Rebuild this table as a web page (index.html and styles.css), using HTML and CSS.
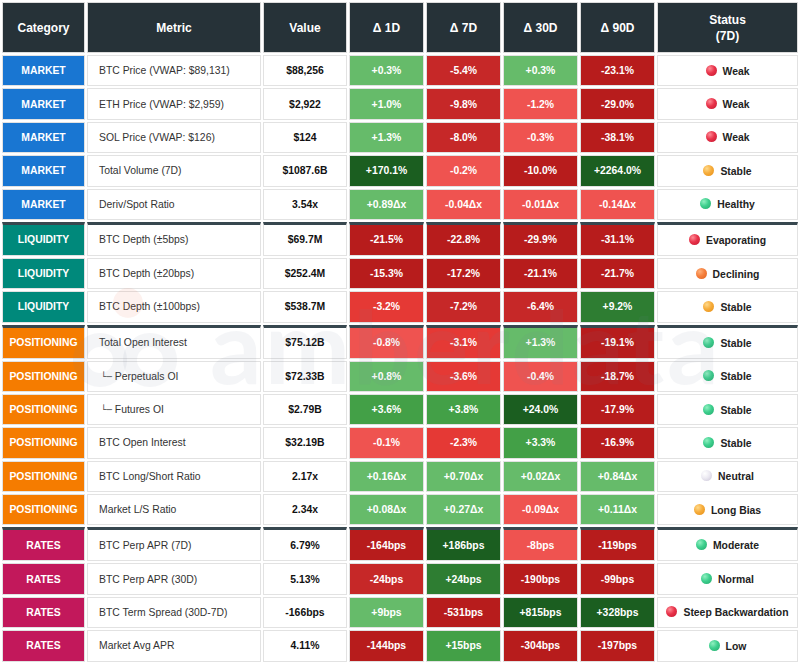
FILE: index.html
```html
<!DOCTYPE html>
<html>
<head>
<meta charset="utf-8">
<link rel="stylesheet" href="styles.css">
</head>
<body>
<div class="wrap">
<table class="grid">
  <colgroup>
    <col class="c-cat"><col class="c-metric"><col class="c-value">
    <col class="c-d"><col class="c-d"><col class="c-d"><col class="c-d">
    <col class="c-status">
  </colgroup>
  <thead>
    <tr>
      <th>Category</th><th>Metric</th><th>Value</th>
      <th>Δ 1D</th><th>Δ 7D</th><th>Δ 30D</th><th>Δ 90D</th>
      <th>Status<br>(7D)</th>
    </tr>
  </thead>
  <tbody>
    <tr>
      <td class="cat market">MARKET</td><td class="metric">BTC Price (VWAP: $89,131)</td><td class="value">$88,256</td>
      <td class="d g1">+0.3%</td><td class="d r3">-5.4%</td><td class="d g1">+0.3%</td><td class="d r4">-23.1%</td>
      <td class="status"><span class="dot red"></span>Weak</td>
    </tr>
    <tr>
      <td class="cat market">MARKET</td><td class="metric">ETH Price (VWAP: $2,959)</td><td class="value">$2,922</td>
      <td class="d g1">+1.0%</td><td class="d r3">-9.8%</td><td class="d r1">-1.2%</td><td class="d r4">-29.0%</td>
      <td class="status"><span class="dot red"></span>Weak</td>
    </tr>
    <tr>
      <td class="cat market">MARKET</td><td class="metric">SOL Price (VWAP: $126)</td><td class="value">$124</td>
      <td class="d g1">+1.3%</td><td class="d r3">-8.0%</td><td class="d r1">-0.3%</td><td class="d r4">-38.1%</td>
      <td class="status"><span class="dot red"></span>Weak</td>
    </tr>
    <tr>
      <td class="cat market">MARKET</td><td class="metric">Total Volume (7D)</td><td class="value">$1087.6B</td>
      <td class="d g4">+170.1%</td><td class="d r1">-0.2%</td><td class="d r4">-10.0%</td><td class="d g4">+2264.0%</td>
      <td class="status"><span class="dot amber"></span>Stable</td>
    </tr>
    <tr>
      <td class="cat market">MARKET</td><td class="metric">Deriv/Spot Ratio</td><td class="value">3.54x</td>
      <td class="d g1">+0.89Δx</td><td class="d r1">-0.04Δx</td><td class="d r1">-0.01Δx</td><td class="d r1">-0.14Δx</td>
      <td class="status"><span class="dot green"></span>Healthy</td>
    </tr>
    <tr class="group">
      <td class="cat liquidity">LIQUIDITY</td><td class="metric">BTC Depth (±5bps)</td><td class="value">$69.7M</td>
      <td class="d r4">-21.5%</td><td class="d r4">-22.8%</td><td class="d r4">-29.9%</td><td class="d r4">-31.1%</td>
      <td class="status"><span class="dot red"></span>Evaporating</td>
    </tr>
    <tr>
      <td class="cat liquidity">LIQUIDITY</td><td class="metric">BTC Depth (±20bps)</td><td class="value">$252.4M</td>
      <td class="d r4">-15.3%</td><td class="d r4">-17.2%</td><td class="d r4">-21.1%</td><td class="d r4">-21.7%</td>
      <td class="status"><span class="dot orange"></span>Declining</td>
    </tr>
    <tr>
      <td class="cat liquidity">LIQUIDITY</td><td class="metric">BTC Depth (±100bps)</td><td class="value">$538.7M</td>
      <td class="d r2">-3.2%</td><td class="d r3">-7.2%</td><td class="d r3">-6.4%</td><td class="d g3">+9.2%</td>
      <td class="status"><span class="dot amber"></span>Stable</td>
    </tr>
    <tr class="group">
      <td class="cat positioning">POSITIONING</td><td class="metric">Total Open Interest</td><td class="value">$75.12B</td>
      <td class="d r1">-0.8%</td><td class="d r2">-3.1%</td><td class="d g1">+1.3%</td><td class="d r4">-19.1%</td>
      <td class="status"><span class="dot green"></span>Stable</td>
    </tr>
    <tr>
      <td class="cat positioning">POSITIONING</td><td class="metric"><span class="tree">└─</span>Perpetuals OI</td><td class="value">$72.33B</td>
      <td class="d g1">+0.8%</td><td class="d r2">-3.6%</td><td class="d r1">-0.4%</td><td class="d r4">-18.7%</td>
      <td class="status"><span class="dot green"></span>Stable</td>
    </tr>
    <tr>
      <td class="cat positioning">POSITIONING</td><td class="metric"><span class="tree">└─</span>Futures OI</td><td class="value">$2.79B</td>
      <td class="d g2">+3.6%</td><td class="d g2">+3.8%</td><td class="d g4">+24.0%</td><td class="d r4">-17.9%</td>
      <td class="status"><span class="dot green"></span>Stable</td>
    </tr>
    <tr>
      <td class="cat positioning">POSITIONING</td><td class="metric">BTC Open Interest</td><td class="value">$32.19B</td>
      <td class="d r1">-0.1%</td><td class="d r2">-2.3%</td><td class="d g2">+3.3%</td><td class="d r4">-16.9%</td>
      <td class="status"><span class="dot green"></span>Stable</td>
    </tr>
    <tr>
      <td class="cat positioning">POSITIONING</td><td class="metric">BTC Long/Short Ratio</td><td class="value">2.17x</td>
      <td class="d g1">+0.16Δx</td><td class="d g1">+0.70Δx</td><td class="d g1">+0.02Δx</td><td class="d g1">+0.84Δx</td>
      <td class="status"><span class="dot white"></span>Neutral</td>
    </tr>
    <tr>
      <td class="cat positioning">POSITIONING</td><td class="metric">Market L/S Ratio</td><td class="value">2.34x</td>
      <td class="d g1">+0.08Δx</td><td class="d g1">+0.27Δx</td><td class="d r1">-0.09Δx</td><td class="d g1">+0.11Δx</td>
      <td class="status"><span class="dot amber"></span>Long Bias</td>
    </tr>
    <tr class="group">
      <td class="cat rates">RATES</td><td class="metric">BTC Perp APR (7D)</td><td class="value">6.79%</td>
      <td class="d r4">-164bps</td><td class="d g4">+186bps</td><td class="d r1">-8bps</td><td class="d r4">-119bps</td>
      <td class="status"><span class="dot green"></span>Moderate</td>
    </tr>
    <tr>
      <td class="cat rates">RATES</td><td class="metric">BTC Perp APR (30D)</td><td class="value">5.13%</td>
      <td class="d r3">-24bps</td><td class="d g3">+24bps</td><td class="d r4">-190bps</td><td class="d r4">-99bps</td>
      <td class="status"><span class="dot green"></span>Normal</td>
    </tr>
    <tr>
      <td class="cat rates">RATES</td><td class="metric">BTC Term Spread (30D-7D)</td><td class="value">-166bps</td>
      <td class="d g1">+9bps</td><td class="d r4">-531bps</td><td class="d g4">+815bps</td><td class="d g4">+328bps</td>
      <td class="status"><span class="dot red"></span>Steep Backwardation</td>
    </tr>
    <tr>
      <td class="cat rates">RATES</td><td class="metric">Market Avg APR</td><td class="value">4.11%</td>
      <td class="d r4">-144bps</td><td class="d g2">+15bps</td><td class="d r4">-304bps</td><td class="d r4">-197bps</td>
      <td class="status"><span class="dot green"></span>Low</td>
    </tr>
  </tbody>
</table>
<div class="watermark" aria-hidden="true">
  <svg width="800" height="662" viewBox="0 0 800 662">
    <circle cx="128" cy="303" r="15" fill="rgba(240,120,90,0.10)"/>
    <g fill="none" stroke="rgba(120,130,150,0.08)" stroke-width="14">
      <circle cx="100" cy="360" r="20"/>
      <circle cx="150" cy="360" r="20"/>
    </g>
    <text x="210" y="384" class="wm-text">amberdata</text>
  </svg>
</div>
</div>
</body>
</html>
```

FILE: styles.css
```css
html, body {
  margin: 0;
  padding: 0;
  background: #ffffff;
}

.wrap {
  position: relative;
  width: 800px;
  height: 662px;
  overflow: hidden;
}

.grid {
  width: 800px;
  table-layout: fixed;
  border-collapse: separate;
  border-spacing: 2px;
  font-family: "Liberation Sans", Arial, sans-serif;
  font-size: 10.4px;
}

.c-cat { width: 83px; }
.c-metric { width: 174px; }
.c-value { width: 84px; }
.c-d { width: 75px; }
.c-status { width: 141px; }

.grid th {
  box-sizing: border-box;
  height: 51px;
  padding: 0 4px;
  background: #263238;
  color: #ffffff;
  font-size: 12px;
  font-weight: bold;
  line-height: 16px;
  text-align: center;
  border: 1px solid #dcdcdc;
}

.grid td {
  box-sizing: border-box;
  height: 31.4px;
  padding: 0;
  border: 1px solid #e2e2e2;
  text-align: center;
  white-space: nowrap;
}

.grid tr.group td {
  height: 33.9px;
  border-top: 3px solid #37474f;
}

.cat {
  color: #ffffff;
  font-weight: bold;
}
.market { background: #1976d2; }
.liquidity { background: #00897b; }
.positioning { background: #f57c00; }
.rates { background: #c2185b; }

.grid td.metric {
  text-align: left;
  padding-left: 11px;
  color: #333333;
}

.tree {
  font-family: "DejaVu Sans", sans-serif;
  font-size: 9px;
  color: #444444;
  margin-left: 2px;
  margin-right: 3px;
}

.value {
  font-weight: bold;
  color: #111111;
}

.d {
  color: #ffffff;
  font-weight: bold;
}
.g1 { background: #66bb6a; }
.g2 { background: #43a047; }
.g3 { background: #2e7d32; }
.g4 { background: #1b5e20; }
.r1 { background: #ef5350; }
.r2 { background: #e53935; }
.r3 { background: #c62828; }
.r4 { background: #b71c1c; }

.status {
  font-weight: bold;
  color: #222222;
}

.dot {
  display: inline-block;
  width: 11px;
  height: 11px;
  border-radius: 50%;
  margin-right: 6px;
  vertical-align: -1px;
}
.dot.red { background: radial-gradient(circle at 35% 32%, #ff8a95 0%, #e8334a 45%, #c4162e 100%); }
.dot.green { background: radial-gradient(circle at 35% 32%, #8ff0c0 0%, #3ecf8e 45%, #22a86a 100%); }
.dot.amber { background: radial-gradient(circle at 35% 32%, #ffd98a 0%, #f6ad3c 45%, #e58c12 100%); }
.dot.orange { background: radial-gradient(circle at 35% 32%, #ffb07a 0%, #f5803e 45%, #e0601c 100%); }
.dot.white { background: radial-gradient(circle at 35% 32%, #ffffff 0%, #eceaf2 45%, #c9c3d6 100%); }

.watermark {
  position: absolute;
  left: 0;
  top: 0;
  width: 800px;
  height: 662px;
  pointer-events: none;
}

.wm-text {
  font-family: "Lato", "Liberation Sans", sans-serif;
  font-weight: bold;
  font-size: 102px;
  letter-spacing: 3px;
  fill: rgba(120, 130, 150, 0.08);
}
```
